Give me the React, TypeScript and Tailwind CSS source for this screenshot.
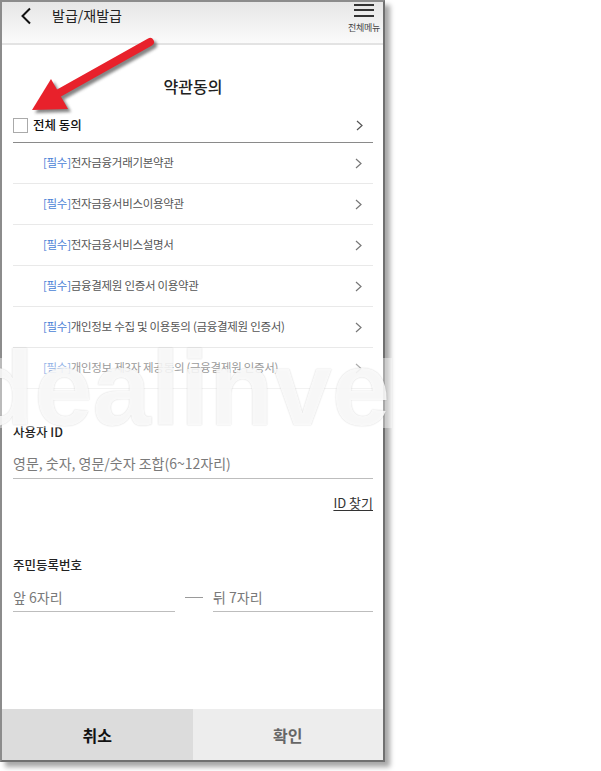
import {ReactNode} from "react";

type TermProps = {
    label: string,
}

const Chevron = ({className}: { className?: string }) =>
    <svg width="7" height="11" viewBox="0 0 7 11" className={className}>
        <polyline points="1,1 6,5.5 1,10" fill="none" stroke="currentColor" strokeWidth="1.2"/>
    </svg>

const TermRow = ({label}: TermProps) =>
    <div className="h-[41px] flex items-center justify-between border-b border-[#e9e9e9] pl-[30px] pr-[11px]">
        <span className="text-[11.5px] text-[#555] tracking-[-0.3px]">
            <span className="text-[#4a7fd6]">[필수]</span>{label}
        </span>
        <Chevron className="text-[#777]"/>
    </div>

const Field = ({children, className}: { children: ReactNode, className?: string }) =>
    <div className={`border-b border-[#bdbdbd] text-[14px] leading-[20px] text-[#7a7a7a] ${className ?? ""}`}>
        {children}
    </div>

const terms = [
    "전자금융거래기본약관",
    "전자금융서비스이용약관",
    "전자금융서비스설명서",
    "금융결제원 인증서 이용약관",
    "개인정보 수집 및 이용동의 (금융결제원 인증서)",
    "개인정보 제3자 제공동의 (금융결제원 인증서)",
]

export default function App() {
    return <div className="relative w-[601px] h-[771px] bg-white overflow-hidden font-['Noto_Sans_CJK_KR','Noto_Sans',sans-serif]">
        <div className="flex flex-col w-[385px] h-[762px] border-2 border-[#8c8c8c] border-r-[#707070] border-b-[#707070] bg-white shadow-[5px_5px_5px_rgba(0,0,0,0.35)]">
            {/* header */}
            <div className="h-[43px] flex justify-between bg-gradient-to-b from-[#e6e6e6] to-[#fbfbfb] border-b-2 border-[#e3e3e3]">
                <div className="h-[27px] flex items-center">
                    <svg width="12" height="18" viewBox="0 0 12 18" className="ml-[18px]">
                        <polyline points="10,1.5 2.5,9 10,16.5" fill="none" stroke="#111" strokeWidth="2"/>
                    </svg>
                    <span className="ml-[20px] text-[14px] text-[#222]">발급/재발급</span>
                </div>
                <div className="flex flex-col items-center pr-[3px] pt-[1.5px]">
                    <div className="w-[20px] h-[2px] bg-[#333]"/>
                    <div className="w-[20px] h-[2px] bg-[#333] mt-[3.5px]"/>
                    <div className="w-[20px] h-[2px] bg-[#333] mt-[3.5px]"/>
                    <span className="text-[9px] leading-[11px] text-[#444] mt-[5px] tracking-[-0.3px]">전체메뉴</span>
                </div>
            </div>

            {/* body */}
            <div className="flex-1 flex flex-col pl-[11px] pr-[10px]">
                <h1 className="mt-[30px] text-center text-[16px] leading-[22px] font-medium text-[#222]">약관동의</h1>

                <div className="mt-[12px] h-[34px] flex items-center justify-between border-b border-[#8a8a8a] pr-[10px]">
                    <div className="flex items-center">
                        <div className="w-[15px] h-[15px] border border-[#aaa] bg-white"/>
                        <span className="ml-[5px] text-[12.5px] font-medium text-[#111]">전체 동의</span>
                    </div>
                    <Chevron className="text-[#555]"/>
                </div>

                {terms.map(t => <TermRow key={t} label={t}/>)}

                <div className="mt-[34px] text-[12.5px] leading-[18px] font-medium text-[#222]">사용자 ID</div>
                <Field className="mt-[12px] pb-[5px]">영문, 숫자, 영문/숫자 조합(6~12자리)</Field>
                <div className="mt-[16px] text-right text-[13px] leading-[16px] text-[#333] underline underline-offset-2">ID 찾기</div>

                <div className="mt-[45px] text-[12.5px] leading-[18px] font-medium text-[#222]">주민등록번호</div>
                <div className="mt-[13px] flex items-center">
                    <Field className="w-[162px] pb-[4px]">앞 6자리</Field>
                    <div className="w-[18px] h-[1.5px] bg-[#9a9a9a] mx-[10px] mb-[4px]"/>
                    <Field className="flex-1 pb-[4px]">뒤 7자리</Field>
                </div>
            </div>

            {/* buttons */}
            <div className="h-[51px] flex">
                <button className="flex-1 bg-[#dcdcdc] text-[16px] font-bold text-[#111]">취소</button>
                <button className="flex-1 bg-[#ededed] text-[16px] font-bold text-[#666]">확인</button>
            </div>
        </div>

        {/* watermark */}
        <div className="absolute left-0 top-[358px] w-[392px] h-[70px] bg-white/40 pointer-events-none"/>
        <div aria-hidden="true" className="absolute left-0 top-[336px] w-[392px] h-[105px] overflow-hidden pointer-events-none">
            <span className="absolute left-[-30px] top-0 text-[105px] leading-[105px] font-bold text-white/85 font-['Liberation_Sans',sans-serif] [text-shadow:0_0_1.5px_rgba(0,0,0,0.2)]">dealinve</span>
        </div>

        {/* red arrow */}
        <svg className="absolute left-0 top-0 pointer-events-none" width="200" height="140" viewBox="0 0 200 140">
            <defs>
                <filter id="sh" x="-20%" y="-20%" width="140%" height="140%">
                    <feGaussianBlur stdDeviation="1.8"/>
                </filter>
            </defs>
            <g transform="translate(3,3)" fill="#666" stroke="#666" filter="url(#sh)" opacity="0.8">
                <line x1="59" x2="150" y1="93" y2="42" strokeWidth="8" strokeLinecap="round"/>
                <polygon points="32,110 51,79 68,109" stroke="none"/>
            </g>
            <g fill="#e8212b" stroke="#e8212b">
                <line x1="59" x2="150" y1="93" y2="42" strokeWidth="8" strokeLinecap="round"/>
                <polygon points="32,110 51,79 68,109" stroke="none"/>
            </g>
        </svg>
    </div>
}
